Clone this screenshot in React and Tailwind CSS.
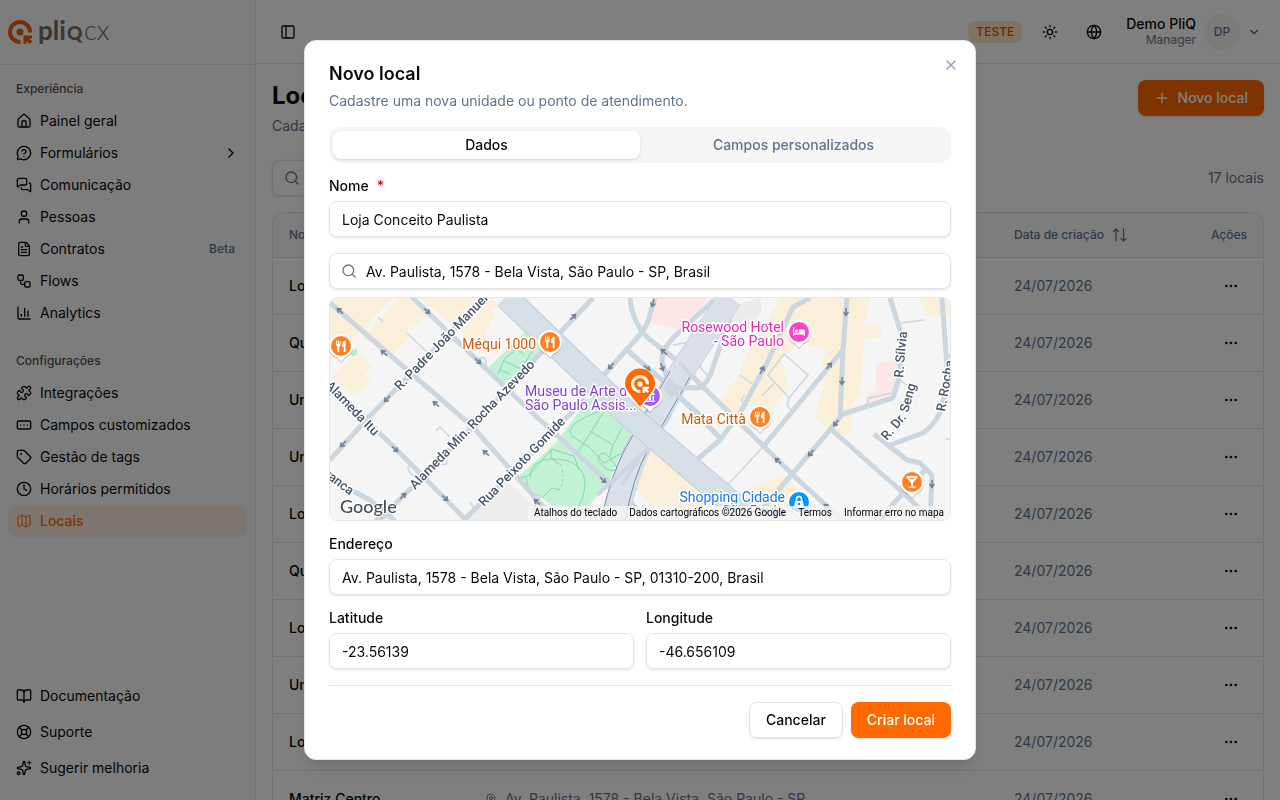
import {
  BookOpen,
  ChartColumn,
  ChevronDown,
  ChevronRight,
  Clock,
  Ellipsis,
  FileText,
  Globe,
  House,
  LifeBuoy,
  Map,
  MapPin,
  MessageCircleQuestionMark,
  MessagesSquare,
  PanelLeft,
  Plus,
  Puzzle,
  RectangleEllipsis,
  Search,
  Sparkles,
  Sun,
  Tag,
  User,
  Workflow,
  X,
} from "lucide-react";

const experience = [
  { label: "Painel geral", icon: House },
  { label: "Formulários", icon: MessageCircleQuestionMark, expandable: true },
  { label: "Comunicação", icon: MessagesSquare },
  { label: "Pessoas", icon: User },
  { label: "Contratos", icon: FileText, tag: "Beta" },
  { label: "Flows", icon: Workflow },
  { label: "Analytics", icon: ChartColumn },
];

const settings = [
  { label: "Integrações", icon: Puzzle },
  { label: "Campos customizados", icon: RectangleEllipsis },
  { label: "Gestão de tags", icon: Tag },
  { label: "Horários permitidos", icon: Clock },
  { label: "Locais", icon: Map, active: true },
];

const support = [
  { label: "Documentação", icon: BookOpen },
  { label: "Suporte", icon: LifeBuoy },
  { label: "Sugerir melhoria", icon: Sparkles },
];

const places = ["Loja", "Quiosque", "Unidade", "Unidade", "Loja", "Quiosque", "Loja", "Unidade", "Loja", "Matriz Centro"];

function BrandMark({ color }) {
  return (
    <g>
      <path d="M22 12.5A10 10 0 1 0 12.5 22" fill="none" stroke={color} strokeWidth="4" />
      <circle cx="12" cy="12" r="3.5" fill={color} />
      <path d="M15.5 15.5H24V18.2L21.4 18.6L24.2 21.6L21.6 24L18.8 21.2L18.2 24H15.5Z" fill={color} />
    </g>
  );
}

function Logo() {
  return (
    <svg width="106" height="32" viewBox="0 0 106 32" role="img" aria-label="pliq cx">
      <g transform="translate(0 4)">
        <BrandMark color="#e2600f" />
      </g>
      <g fill="#776c68" fontFamily="Lato, sans-serif">
        <text x="30" y="24" fontSize="26" fontWeight="700">pli</text>
        <text x="59" y="24" fontSize="19" fontWeight="900">Q</text>
        <text x="76" y="24" fontSize="27" fontWeight="300">cx</text>
      </g>
    </svg>
  );
}

function NavItem({ label, icon: Icon, expandable, tag, active }) {
  return (
    <a
      href="#"
      className={
        active
          ? "flex h-8 items-center gap-2 rounded-lg bg-[#fbebe0] px-2 text-sm font-medium text-[#ff6900]"
          : "flex h-8 items-center gap-2 rounded-lg px-2 text-sm text-neutral-950"
      }
    >
      <Icon size={16} strokeWidth={active ? 1.5 : 2} />
      <span>{label}</span>
      {expandable && <ChevronRight size={16} className="ml-auto" />}
      {tag && <span className="ml-auto pr-1 text-xs font-medium text-slate-500">{tag}</span>}
    </a>
  );
}

function NavGroup({ title, items }) {
  return (
    <div className="p-2">
      <div className="flex h-8 items-center px-2 text-xs font-medium text-neutral-600">{title}</div>
      {items.map((item) => (
        <NavItem key={item.label} {...item} />
      ))}
    </div>
  );
}

function Sidebar() {
  return (
    <aside className="flex w-64 shrink-0 flex-col border-r border-neutral-200 bg-neutral-50">
      <div className="flex h-[65px] items-center border-b border-neutral-200 px-2">
        <Logo />
      </div>
      <nav className="flex-1">
        <NavGroup title="Experiência" items={experience} />
        <NavGroup title="Configurações" items={settings} />
      </nav>
      <div className="flex flex-col gap-1 p-2 pb-4">
        {support.map((item) => (
          <NavItem key={item.label} {...item} />
        ))}
      </div>
    </aside>
  );
}

function TopBar() {
  return (
    <header className="flex h-16 shrink-0 items-center border-b border-neutral-200 px-4">
      <button aria-label="Menu" className="flex size-8 items-center justify-center">
        <PanelLeft size={16} />
      </button>
      <div className="ml-auto flex items-center">
        <span className="mr-3 rounded-lg bg-[#ffe9c8] px-2 py-1 text-xs leading-[14px] font-medium text-[#f54900]">TESTE</span>
        <button aria-label="Tema" className="mr-3 flex size-8 items-center justify-center">
          <Sun size={16} />
        </button>
        <button aria-label="Idioma" className="mr-4 flex size-8 items-center justify-center">
          <Globe size={16} />
        </button>
        <div className="text-right">
          <div className="text-sm leading-4 font-medium">Demo PliQ</div>
          <div className="text-xs text-slate-500">Manager</div>
        </div>
        <span className="mr-1 ml-2 flex size-9 items-center justify-center rounded-full bg-neutral-100 text-xs font-medium text-slate-500">
          DP
        </span>
        <button aria-label="Conta" className="flex size-5 items-center justify-center text-slate-600">
          <ChevronDown size={14} />
        </button>
      </div>
    </header>
  );
}

function SortIcon() {
  return (
    <svg width="16" height="16" viewBox="0 0 16 16" fill="none" stroke="currentColor" strokeWidth="1.3" strokeLinecap="round" strokeLinejoin="round">
      <path d="M4 14V2M1.500 4.500L4 2L6.500 4.500M11.500 2V14M9 11.500L11.500 14L14 11.500" />
    </svg>
  );
}

function PlacesTable() {
  return (
    <div className="mt-4 overflow-hidden rounded-xl border border-neutral-200">
      <table className="w-full table-fixed border-collapse text-left">
        <thead className="bg-neutral-50">
          <tr className="h-11 border-b border-neutral-200 text-xs text-slate-500">
            <th className="w-[196px] pl-4 font-medium">Nome</th>
            <th className="pl-4 font-medium">Endereço</th>
            <th className="w-44 font-medium">
              <span className="flex items-center gap-2">
                Data de criação
                <SortIcon />
              </span>
            </th>
            <th className="w-[73px] pr-4 text-right font-medium">Ações</th>
          </tr>
        </thead>
        <tbody>
          {places.map((place, i) => (
            <tr key={i} className="h-[57px] border-b border-neutral-200 text-sm text-slate-500">
              <td className="pl-4 font-medium text-neutral-950">{place}</td>
              <td className="pl-4">
                <span className="flex items-center gap-2">
                  <MapPin size={12} />
                  Av. Paulista, 1578 - Bela Vista, São Paulo - SP
                </span>
              </td>
              <td>24/07/2026</td>
              <td className="pr-4">
                <button aria-label="Ações" className="ml-auto flex size-8 items-center justify-center text-neutral-950">
                  <Ellipsis size={16} />
                </button>
              </td>
            </tr>
          ))}
        </tbody>
      </table>
    </div>
  );
}

/* Street map */

const streets = [
  "M330 303L473 427L540 503L557 521",
  "M412 297L480 363L540 420L627 499L650 521",
  "M330 460L365 421L400 385L485 297",
  "M330 385L397 450L467 521",
  "M378 521L463 437L537 357L593 298",
  "M463 521L540 445L585 399M602 377L638 337Q648 326 650 314L655 298",
  "M328 478L370 500L395 521",
  "M627 350L670 387L720 438",
  "M630 298Q632 322 648 338L680 363L700 384L740 423L793 475L843 521",
  "M714 300L674 337Q661 350 662 362L670 387L697 388Q707 387 713 367L730 318",
  "M670 387L662 400",
  "M810 298L793 307L767 363L740 413L720 440L693 463",
  "M847 298L843 350L840 417L830 430L793 473L752 521",
  "M843 350L763 447",
  "M840 415L893 398L900 375L901 333L890 298",
  "M832 430L900 490L933 521",
  "M874 434L907 460L920 463L932 475L930 521",
  "M890 445L923 433Q941 420 944 398L947 367L942 298",
  "M927 468L877 521",
  "M375 521L392 512",
];

const paths = [
  "M763 447L723 490",
  "M407 333L427 352",
  "M436 431L440 427L450 437",
  "M413 476Q403 466 413 464L416 470M441 464Q450 466 446 459",
  "M378 317L383 322M475 361Q487 352 486 366L483 370",
  "M673 345L690 342L704 350L700 367L709 377",
  "M670 390L672 412Q668 425 657 433",
  "M784 354L808 375L789 398L768 375ZM789 398L787 405L791 410",
  "M762 396L774 383M740 375L752 384M745 395Q738 400 747 406",
  "M901 323L924 320M900 380L908 386M867 404L869 398L892 393",
  "M470 502L474 508M945 439H951",
];

const arrows = [
  [340, 311, 222], [427, 311, 42], [384, 353, 222], [478, 361, 42], [387, 399, 132],
  [436, 404, 222], [343, 444, 132], [395, 449, 42], [486, 453, 222], [445, 498, 42],
  [403, 496, -45], [573, 317, -45], [653, 303, 105], [611, 366, 132],
  [662, 367, 72], [664, 352, 222], [647, 368, 40], [603, 480, 42], [537, 502, 222], [762, 370, -62],
  [829, 366, -50], [846, 312, 92], [842, 381, 92], [836, 423, 130], [811, 453, 130],
  [778, 461, 222], [932, 484, 92], [882, 518, -48], [827, 507, 222],
];

function Pin({ x, y, color, children }) {
  return (
    <g transform={`translate(${x} ${y})`}>
      <path d="M0 16L-4 11.5A12 12 0 1 1 4 11.5Z" transform="translate(0 1)" fill="#00000040" />
      <path d="M0 16L-4 11.5A12 12 0 1 1 4 11.5Z" fill="#fff" />
      <circle r="10" fill={color} />
      <g fill="#fff">{children}</g>
    </g>
  );
}

function Cutlery() {
  return <path d="M-5 -5.500V-2Q-5 0 -3.600 .4V6H-1.800V.4Q-.4 0 -.4 -2V-5.500H-1.400V-2H-2.200V-5.500H-3.200V-2H-4V-5.500ZM4.500 -5.500Q1.200 -5 1.200 -1V1H2.800V6H4.500Z" />;
}

function StreetMap() {
  return (
    <svg className="size-full" viewBox="330 298 620 222" preserveAspectRatio="xMidYMid slice" role="img" aria-label="Mapa">
      <rect x="330" y="298" width="620" height="222" fill="#f5f5f5" />
      {/* blocks */}
      <g fill="#f9efdb">
        <path d="M330 298H393L330 362ZM399 298H411L433 318H420V325H408V340L390 357L363 337Z" />
        <path d="M419 298H485L478 308L495 313L484 336L472 340Z" />
        <path d="M330 378L350 360L360 352L372 367L364 376L371 382L357 395Z" />
        <path d="M486 298H491L498 305L487 315L480 309Z" />
        <path d="M768 320L780 298H846V340L828 350L800 343L781 358L788 386L770 414L748 406L732 415L721 400L729 386L737 380L746 356Z" />
        <path d="M847 298H870L864 325H878Q886 330 878 338H864L860 395L852 403V432L840 441L815 417L826 375L822 361Z" />
        <path d="M920 298H950V316H927Z" />
        <path d="M654 427L687 449L705 469L699 478L717 497L690 515L650 505L637 490Z" />
        <path d="M637 403L645 397L650 402L645 420L632 416Z" />
        <path d="M745 490L765 482L783 475L818 507L800 512L740 508Z" />
        <path d="M524 475L580 414L592 396L598 402L550 450Z" />
      </g>
      <g fill="#fde7e6">
        <path d="M657 298H707L704 306L680 330L648 322Z" />
        <path d="M876 363L898 360V390L893 399L866 405V396L876 390Z" />
      </g>
      <path d="M480 502L505 479L550 521H460Z" fill="#eeedec" />
      <path d="M733 306L760 298L762 310L748 328L730 325Z" fill="#ecebea" />
      <path d="M350 353L357 348L357 354L352 357Z" fill="#b7ecc9" />
      {/* parks */}
      <g fill="#c3f1d5">
        <path d="M527 330L540 342V357L505 383L488 368Z" />
        <path d="M588 399L598 397L634 433L617 462L608 483L582 514H562L517 478L556 443Z" />
        <path d="M946 354H950V370H946Z" />
      </g>
      <g fill="none" stroke="#84d6b0" strokeWidth="1">
        <path d="M498 374L505 358L530 340M504 361L521 369L536 345M500 370L510 374M516 349L524 354" />
        <path d="M600 411Q563 425 572 436L589 447L604 463L618 455L640 449M607 406L591 432L578 452M590 431L613 445L622 428M598 460Q600 448 609 457L618 469Q608 475 598 460M613 445L610 457M517 479L528 476L552 449L564 453L574 456L579 470M551 449V458L562 466M530 477Q531 459 552 459Q584 459 585 484Q584 500 576 510M526 478Q528 493 540 496L533 511M542 498L552 488L560 490" />
        <path d="M562 469Q565 487 557 490M618 490Q608 497 610 507L625 510" strokeDasharray="3 2" />
      </g>
      {/* roads */}
      <g fill="none" stroke="#cbd6de" strokeWidth="1.500">
        {paths.map((d) => (
          <path key={d} d={d} />
        ))}
      </g>
      <g fill="none" stroke="#cbd6de" strokeWidth="5" strokeLinejoin="round">
        {streets.map((d) => (
          <path key={d} d={d} />
        ))}
      </g>
      <path d="M613 521L635 453L680 374L730 298" fill="none" stroke="#b8c7d7" strokeWidth="25" />
      <path d="M613 521L635 453L680 374L730 298" fill="none" stroke="#dadfe8" strokeWidth="24" />
      <path d="M601 521Q610 477 625 449L670 371M625 521Q634 474 647 452L690 377" fill="none" stroke="#6f8eb4" strokeWidth="1" />
      <path d="M597 495L655 443M672 390L707 420M669 387L693 388M643 452L622 485M680 363L700 384" fill="none" stroke="#cbd6de" strokeWidth="4" />
      <path d="M506 297L632 418L755 523" fill="none" stroke="#c3ced9" strokeWidth="25" />
      <path d="M506 297L632 418L755 523" fill="none" stroke="#d6dee6" strokeWidth="23" />
      <path d="M663 388L670 377L680 389L672 398Z" fill="#cbd6de" />
      <g fill="none" stroke="#738297" strokeWidth="1.600">
        {arrows.map(([x, y, angle]) => (
          <path key={`${x}-${y}`} d="M-4 0H3M0 -2.500L3.500 0L0 2.500" transform={`translate(${x} ${y}) rotate(${angle})`} />
        ))}
      </g>
      {/* street names */}
      <g
        fill="#475569"
        stroke="#fff"
        strokeWidth="3"
        strokeLinejoin="round"
        paintOrder="stroke"
        fontFamily="Roboto, sans-serif"
        fontSize="13"
        fontWeight="500"
      >
        <text transform="translate(400 391) rotate(-46)">R. Padre João Manuel</text>
        <text transform="translate(415 490) rotate(-46)">Alameda Min. Rocha Azevedo</text>
        <text transform="translate(484 507) rotate(-46)">Rua Peixoto Gomide</text>
        <text transform="translate(325 386) rotate(46)">Alameda Itu</text>
        <text transform="translate(324 476) rotate(37)">ranca</text>
        <text transform="translate(903 378) rotate(-85)">R. Sílvia</text>
        <text transform="translate(887 441) rotate(-50)">R. Dr.</text>
        <text transform="translate(908 413) rotate(-74)">Seng</text>
        <text transform="translate(945 412) rotate(-80)">R. Rocha</text>
      </g>
      {/* points of interest */}
      <g
        stroke="#fff"
        strokeWidth="3"
        strokeLinejoin="round"
        paintOrder="stroke"
        fontFamily="Roboto, sans-serif"
        fontSize="14"
        textAnchor="end"
      >
        <text x="536" y="349" fill="#d05a0a">Méqui 1000</text>
        <text x="784" y="332" fill="#e32bb4">Rosewood Hotel</text>
        <text x="784" y="346" fill="#e32bb4">- São Paulo</text>
        <text x="746" y="424" fill="#d05a0a">Mata Città</text>
        <text x="785" y="502" fill="#2276e3">Shopping Cidade</text>
        <text x="785" y="516" fill="#2276e3">São Paulo</text>
        <text x="525" y="396" fill="#8540d8" textAnchor="start">Museu de Arte de</text>
        <text x="525" y="410" fill="#8540d8" textAnchor="start">São Paulo Assis...</text>
      </g>
      <Pin x={341} y={346} color="#ff8126"><Cutlery /></Pin>
      <Pin x={550} y={342} color="#ff8126"><Cutlery /></Pin>
      <Pin x={760} y={417} color="#ff8126"><Cutlery /></Pin>
      <Pin x={799} y={332} color="#f447c8">
        <path d="M-6 -4.500H-4.800V1H-.2V-2.500H4Q6 -2.500 6 -.5V4H4.800V2.500H-4.800V4H-6Z" />
        <circle cx="-2.500" cy="-1" r="1.500" />
      </Pin>
      <Pin x={799} y={502} color="#0a94ff">
        <path d="M-4 -1H4L5 6H-5Z" />
        <path d="M-2.500 0V-3A2.500 2.500 0 0 1 2.500 -3V0" fill="none" stroke="#fff" strokeWidth="1.500" />
        <circle cy="2" r="1.300" fill="#0a94ff" />
      </Pin>
      <Pin x={912} y={482} color="#ff8126">
        <path d="M-5.500 -6H5.500V-4.500L.9 1V4.500H3.500V6H-3.500V4.500H-.9V1L-5.500 -4.500Z" />
        <path d="M-2.800 -3.800H2.800L2 -2.700H-2Z" fill="#ff8126" />
      </Pin>
      <Pin x={650} y={396} color="#a15cf5">
        <path d="M-5 -2L0 -5L5 -2V-1H-5ZM-4 0H-2.500V4H-4ZM-1 0H1V4H-1ZM2.500 0H4V4H2.500ZM-5 4.500H5V6H-5Z" />
      </Pin>
      {/* selected place */}
      <path d="M640 408L628 395Q624 389 624 384A16 16 0 0 1 656 384Q656 389 652 395Z" fill="#fff" />
      <path d="M640 407L629 393Q625 388 625 383.500A15 15 0 0 1 655 383.500Q655 388 651 393Z" fill="#ff6900" />
      <g transform="translate(631 375) scale(.75)">
        <BrandMark color="#fff" />
      </g>
      <text
        x="340"
        y="513"
        fill="#4a4d51"
        stroke="#fff"
        strokeWidth="2"
        paintOrder="stroke"
        fontFamily="Lato, sans-serif"
        fontSize="18"
        fontWeight="500"
      >
        Google
      </text>
    </svg>
  );
}

function Field({ id, label, value, required }) {
  return (
    <div className="flex flex-col gap-2">
      <label htmlFor={id} className="text-sm leading-[14px] font-medium">
        {label}
        {required && <span className="ml-2 text-red-600">*</span>}
      </label>
      <input
        id={id}
        defaultValue={value}
        className="h-9 w-full rounded-lg border border-neutral-200 px-3 text-sm shadow-sm outline-none"
      />
    </div>
  );
}

function NewPlaceDialog() {
  return (
    <div className="fixed inset-0 flex items-center justify-center bg-black/50">
      <div
        role="dialog"
        aria-labelledby="dialog-title"
        className="relative flex max-h-[90vh] w-full max-w-2xl flex-col gap-4 overflow-hidden rounded-xl border border-neutral-200 bg-white p-6 shadow-lg"
      >
        <button aria-label="Fechar" className="absolute top-4 right-4 text-slate-400">
          <X size={16} />
        </button>
        <div className="flex shrink-0 flex-col gap-2">
          <h2 id="dialog-title" className="text-lg leading-[18px] font-semibold">Novo local</h2>
          <p className="text-sm text-slate-500">Cadastre uma nova unidade ou ponto de atendimento.</p>
        </div>

        <div role="tablist" className="grid h-9 shrink-0 grid-cols-2 rounded-xl bg-neutral-100 p-1 text-sm font-medium">
          <button role="tab" aria-selected="true" className="rounded-lg bg-white shadow-sm">Dados</button>
          <button role="tab" aria-selected="false" className="text-slate-500">Campos personalizados</button>
        </div>

        <Field id="nome" label="Nome" value="Loja Conceito Paulista" required />

        <div className="flex shrink-0 flex-col gap-2">
          <div className="relative">
            <Search size={16} className="absolute top-[10px] left-3 text-slate-500" />
            <input
              aria-label="Buscar endereço"
              defaultValue="Av. Paulista, 1578 - Bela Vista, São Paulo - SP, Brasil"
              className="h-9 w-full rounded-lg border border-neutral-200 pr-3 pl-9 text-sm shadow-sm outline-none"
            />
          </div>
          <div className="relative h-56 overflow-hidden rounded-lg border border-neutral-200">
            <StreetMap />
            <div className="absolute right-0 bottom-0 flex gap-3 bg-neutral-100/80 px-[6px] font-[Roboto,sans-serif] text-[10px] leading-[14px] text-black">
              <button>Atalhos do teclado</button>
              <span>Dados cartográficos ©2026 Google</span>
              <a href="#">Termos</a>
              <a href="#">Informar erro no mapa</a>
            </div>
          </div>
        </div>

        <Field id="endereco" label="Endereço" value="Av. Paulista, 1578 - Bela Vista, São Paulo - SP, 01310-200, Brasil" />
        <div className="grid shrink-0 grid-cols-2 gap-3">
          <Field id="latitude" label="Latitude" value="-23.56139" />
          <Field id="longitude" label="Longitude" value="-46.656109" />
        </div>

        <div className="flex shrink-0 justify-end gap-2 border-t border-neutral-200 pt-4 text-sm font-medium">
          <button className="h-9 rounded-lg border border-neutral-200 px-4 shadow-sm">Cancelar</button>
          <button className="h-9 rounded-lg bg-[#ff6900] px-4 text-white shadow-sm">Criar local</button>
        </div>
      </div>
    </div>
  );
}

export default function App() {
  return (
    <div className="flex h-screen overflow-hidden bg-white font-[Inter,sans-serif] text-neutral-950">
      <Sidebar />
      <div className="flex min-w-0 flex-1 flex-col">
        <TopBar />
        <main className="flex-1 overflow-hidden p-4">
          <div className="flex items-start justify-between">
            <div>
              <h1 className="text-2xl font-bold">Locais</h1>
              <p className="mt-1 text-sm text-slate-500">Cadastre e gerencie os locais.</p>
            </div>
            <button className="flex h-9 items-center gap-2 rounded-lg bg-[#ff6900] px-4 text-sm font-medium text-white shadow-sm">
              <Plus size={16} />
              Novo local
            </button>
          </div>
          <div className="mt-6 flex items-center justify-between">
            <div className="relative">
              <Search size={16} className="absolute top-[10px] left-3 text-slate-500" />
              <input aria-label="Buscar local" className="h-9 w-80 rounded-lg border border-neutral-200 pl-9 text-sm shadow-sm" />
            </div>
            <span className="text-sm text-slate-500">17 locais</span>
          </div>
          <PlacesTable />
        </main>
      </div>
      <NewPlaceDialog />
    </div>
  );
}
